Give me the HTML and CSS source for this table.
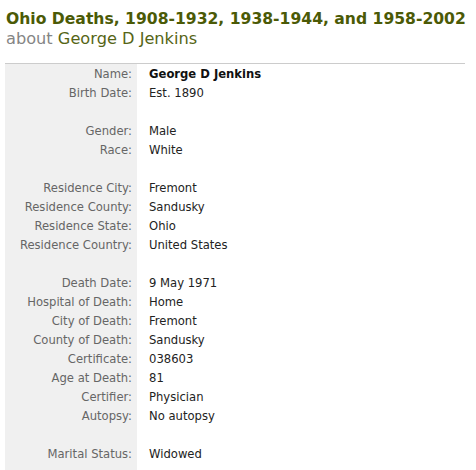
FILE: index.html
```html
<!DOCTYPE html>
<html>
<head>
<meta charset="utf-8">
<link rel="stylesheet" href="styles.css">
</head>
<body>
<div class="page">
  <h1 class="title">Ohio Deaths, 1908-1932, 1938-1944, and 1958-2002</h1>
  <div class="subtitle"><span class="about">about</span> George D Jenkins</div>
  <table class="record">
    <tr><th>Name:</th><td class="name">George D Jenkins</td></tr>
    <tr><th>Birth Date:</th><td>Est. 1890</td></tr>
    <tr class="gap"><th>&nbsp;</th><td>&nbsp;</td></tr>
    <tr><th>Gender:</th><td>Male</td></tr>
    <tr><th>Race:</th><td>White</td></tr>
    <tr class="gap"><th>&nbsp;</th><td>&nbsp;</td></tr>
    <tr><th>Residence City:</th><td>Fremont</td></tr>
    <tr><th>Residence County:</th><td>Sandusky</td></tr>
    <tr><th>Residence State:</th><td>Ohio</td></tr>
    <tr><th>Residence Country:</th><td>United States</td></tr>
    <tr class="gap"><th>&nbsp;</th><td>&nbsp;</td></tr>
    <tr><th>Death Date:</th><td>9 May 1971</td></tr>
    <tr><th>Hospital of Death:</th><td>Home</td></tr>
    <tr><th>City of Death:</th><td>Fremont</td></tr>
    <tr><th>County of Death:</th><td>Sandusky</td></tr>
    <tr><th>Certificate:</th><td>038603</td></tr>
    <tr><th>Age at Death:</th><td>81</td></tr>
    <tr><th>Certifier:</th><td>Physician</td></tr>
    <tr><th>Autopsy:</th><td>No autopsy</td></tr>
    <tr class="gap"><th>&nbsp;</th><td>&nbsp;</td></tr>
    <tr><th>Marital Status:</th><td>Widowed</td></tr>
    <tr class="gap"><th>&nbsp;</th><td>&nbsp;</td></tr>
  </table>
</div>
</body>
</html>
```

FILE: styles.css
```css
html, body {
  margin: 0;
  padding: 0;
  background: #ffffff;
}
.page {
  padding: 10px 0 0 6px;
  font-family: "DejaVu Sans", Verdana, sans-serif;
}
.title {
  margin: 0;
  font-size: 15.6px;
  font-weight: bold;
  color: #4b5a06;
  line-height: 19px;
}
.subtitle {
  font-size: 16.2px;
  color: #566516;
  line-height: 20px;
}
.about {
  color: #858585;
}
.record {
  margin-top: 14px;
  margin-left: -1px;
  width: 460px;
  border-collapse: collapse;
  border-top: 1px solid #cccccc;
  font-size: 11.6px;
}
.record th {
  width: 127px;
  background: #f0f0f0;
  color: #666666;
  font-weight: normal;
  text-align: right;
  padding: 0 5px 0 0;
  height: 19px;
  white-space: nowrap;
}
.record td {
  color: #222222;
  padding: 0 0 0 12px;
  height: 19px;
}
.record td.name {
  font-weight: bold;
  color: #111111;
}
```
